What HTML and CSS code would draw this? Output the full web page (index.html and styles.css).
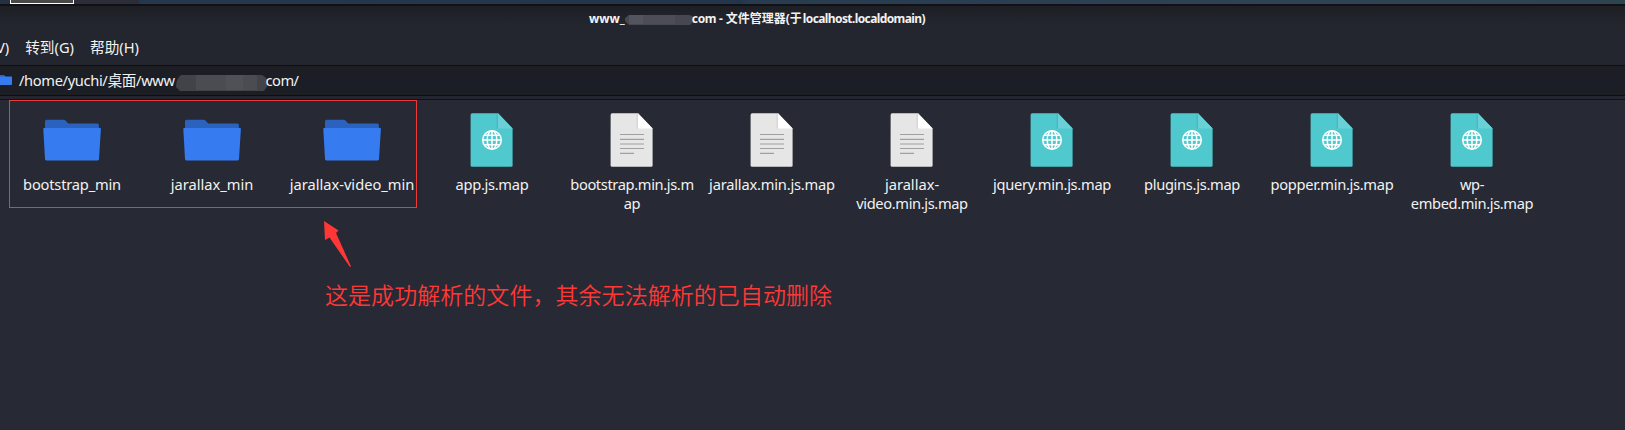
FILE: index.html
```html
<!DOCTYPE html>
<html lang="zh-CN">
<head>
<meta charset="utf-8">
<title>文件管理器</title>
<link rel="stylesheet" href="styles.css">
</head>
<body>
<svg class="defs" aria-hidden="true">
  <symbol id="folder" viewBox="0 0 64 64">
    <path fill="#2b62bd" d="M5 31V13.300q0-1.600 1.600-1.600H23.500q1.200 0 2 .9l2.700 2.900H57.300q1.600 0 1.600 1.600V31z"/>
    <path fill="#367bf0" d="M4.300 20H60q1 0 .9 1L59 51.100q-.1 1.300-1.300 1.300H6.300q-1.200 0-1.300-1.300L3.300 21q0-1 1-1z"/>
  </symbol>
  <symbol id="web" viewBox="0 0 64 64">
    <path fill="#50c9ce" d="M12.200 5.300H38L52.600 20.500V57.200q0 1.600-1.600 1.600H12.200q-1.600 0-1.600-1.600V6.900q0-1.600 1.600-1.600z"/>
    <path fill="#48b9bf" d="M36.500 6h1.500v14.500h-1.500z"/>
    <path fill="#69d1d5" d="M38 5.300 52.600 20.500H39.500q-1.500 0-1.500-1.500z"/>
    <g fill="none" stroke="#fff" stroke-width="1.500">
      <circle cx="32" cy="32" r="9.300"/><ellipse cx="32" cy="32" rx="4.800" ry="9.300"/>
      <path d="M32 22.500v19M22.500 32h19M24 27.200h16M24 36.800h16"/>
    </g>
  </symbol>
  <symbol id="text" viewBox="0 0 64 64">
    <path fill="#e6e6e6" d="M12.200 5.300H38L52.600 20.500V57.200q0 1.600-1.600 1.600H12.200q-1.600 0-1.600-1.600V6.900q0-1.600 1.600-1.600z"/>
    <path fill="#d8d8d8" d="M36.500 6h1.500v14.500h-1.500z"/>
    <path fill="#fff" d="M38 5.300 52.600 20.500H39.500q-1.500 0-1.500-1.500z"/>
    <path stroke="#a0a0a0" stroke-width="1.200" d="M20 26.500h24M20 31.400h24M20 36h24M20 40.500h24M20 45.400h14"/>
  </symbol>
</svg>
<div class="window">
  <div class="panel"><span class="task"></span><span class="task-label"></span></div>
  <header class="head">
    <div class="title"><span>www_</span><svg class="mask-title" viewBox="0 0 70 12"><path fill="#464750" d="M4 1H64Q70 2 69 7L65 11H4L0 7V4z"/><path fill="#53545d" d="M4 1h14v9H4z"/><path fill="#4c4d56" d="M18 1h32v9H18z"/></svg><span class="t-com">com - </span><span class="t-cjk">文件管理器(于</span><span class="t-host">localhost.localdomain)</span></div>
    <nav class="menu"><span class="cut">V)</span><span>转到(G)</span><span>帮助(H)</span></nav>
  </header>
  <div class="path">
    <svg class="path-icon" viewBox="0 0 12 12"><path fill="#2b62bd" d="M0 0h4l2 2h5v3H0z"/><path fill="#367bf0" d="M0 1.500h12v7.500q0 1-1 1H0z"/></svg>
    <span class="p-main">/home/yuchi/桌面/www</span><svg class="mask-path" viewBox="0 0 93 17"><path fill="#424348" d="M5 0H86Q93 4 92 10L88 16H4L0 12Q0 4 5 0z"/><path fill="#4b4c51" d="M20 0h61v15H20z"/><path fill="#505156" d="M50 0h17v15H50z"/></svg><span class="p-end">com/</span>
  </div>
  <div class="gap"></div>
  <main class="files">
    <div class="file"><svg><use href="#folder"/></svg><span class="tight">bootstrap_min</span></div>
    <div class="file"><svg><use href="#folder"/></svg><span>jarallax_min</span></div>
    <div class="file"><svg><use href="#folder"/></svg><span>jarallax-video_min</span></div>
    <div class="file"><svg><use href="#web"/></svg><span class="tighter">app.js.map</span></div>
    <div class="file"><svg><use href="#text"/></svg><span class="tightest">bootstrap.min.js.m<br>ap</span></div>
    <div class="file"><svg><use href="#text"/></svg><span class="tight">jarallax.min.js.map</span></div>
    <div class="file"><svg><use href="#text"/></svg><span>jarallax-<br><span class="tightest">video.min.js.map</span></span></div>
    <div class="file"><svg><use href="#web"/></svg><span class="tighter">jquery.min.js.map</span></div>
    <div class="file"><svg><use href="#web"/></svg><span class="tighter">plugins.js.map</span></div>
    <div class="file"><svg><use href="#web"/></svg><span class="tighter">popper.min.js.map</span></div>
    <div class="file"><svg><use href="#web"/></svg><span class="tightest">wp-<br>embed.min.js.map</span></div>
  </main>
  <div class="frame"></div>
  <svg class="arrow" viewBox="0 0 30 48"><path fill="#ff3836" d="M1 0 15.500 9.500 13 12 28 45.500 27 46 6.500 16.500 2 19z"/></svg>
  <p class="note">这是成功解析的文件，其余无法解析的已自动删除</p>
</div>
</body>
</html>
```

FILE: styles.css
```css
* { box-sizing: border-box; }
body { margin: 0; background: #272a34; overflow: hidden; }
.defs { position: absolute; width: 0; height: 0; }
.window {
  position: relative;
  width: 1625px;
  height: 430px;
  color: #f2f2f2;
  font: 14.67px/19px "Noto Sans", "Noto Sans CJK SC", sans-serif;
  white-space: nowrap;
}
.panel {
  display: flex;
  height: 4px;
  padding-left: 10px;
  background: linear-gradient(90deg, #22303f, #26384e 160px, #23354a 740px, #283b4f 750px, #2e4354 80%, #2e4550);
}
.task { width: 64px; background: #4b4947; border: 1px solid #fff; border-top: 0; }
.task-label { width: 65px; background: #2b2d38; }
.head {
  height: 62px;
  border-top: 2px solid #101116;
  border-bottom: 1px solid #0e0f13;
  background: linear-gradient(#1d1f24, #23262f 20px, #23262e);
}
.title {
  display: flex;
  height: 26px;
  padding: 4px 0 0 589px;
  font-size: 12px;
  line-height: 18px;
  font-weight: 700;
}
.title span { white-space: pre; }
.mask-title { width: 70px; height: 12px; margin: 4px -3px 0 0; }
.title .t-com { width: 34px; letter-spacing: -.3px; }
.title .t-cjk { width: 77px; }
.title .t-host { letter-spacing: -.6px; }
.menu { display: flex; height: 32px; padding-top: 5px; gap: 16px; line-height: 20px; }
.cut { margin-left: -4px; }
.path {
  display: flex;
  height: 30px;
  padding-top: 4px;
  border-bottom: 1px solid #0e0f13;
  background: linear-gradient(#1d1e22, #1b1e26 10px, #1b1e26 20px, #1c1e23);
  line-height: 20px;
}
.path-icon { width: 12px; height: 12px; margin: 5px 7px 0 0; }
.p-main { width: 156.5px; letter-spacing: -.35px; }
.p-end { letter-spacing: -.5px; }
.mask-path { width: 93px; height: 17px; margin: 5px -3px 0 0; }
.gap { height: 4px; background: #23262e; border-bottom: 1px solid #101116; }
.files { display: flex; padding: 8px 0 0 2px; }
.file { display: flex; flex-direction: column; align-items: center; width: 140px; text-align: center; }
.file svg { width: 64px; height: 64px; margin-bottom: 3px; }
.tight { letter-spacing: -.2px; }
.tighter { letter-spacing: -.3px; }
.tightest { letter-spacing: -.37px; }
.frame { position: absolute; left: 9px; top: 100px; width: 408px; height: 108px; border: 1px solid #f03a3a; }
.arrow { position: absolute; left: 323px; top: 221px; width: 30px; height: 48px; }
.note {
  position: absolute;
  left: 325px;
  top: 277px;
  margin: 0;
  color: #ff3836;
  font: 350 23px/34px "Noto Sans CJK SC", sans-serif;
  letter-spacing: .05px;
}
```
